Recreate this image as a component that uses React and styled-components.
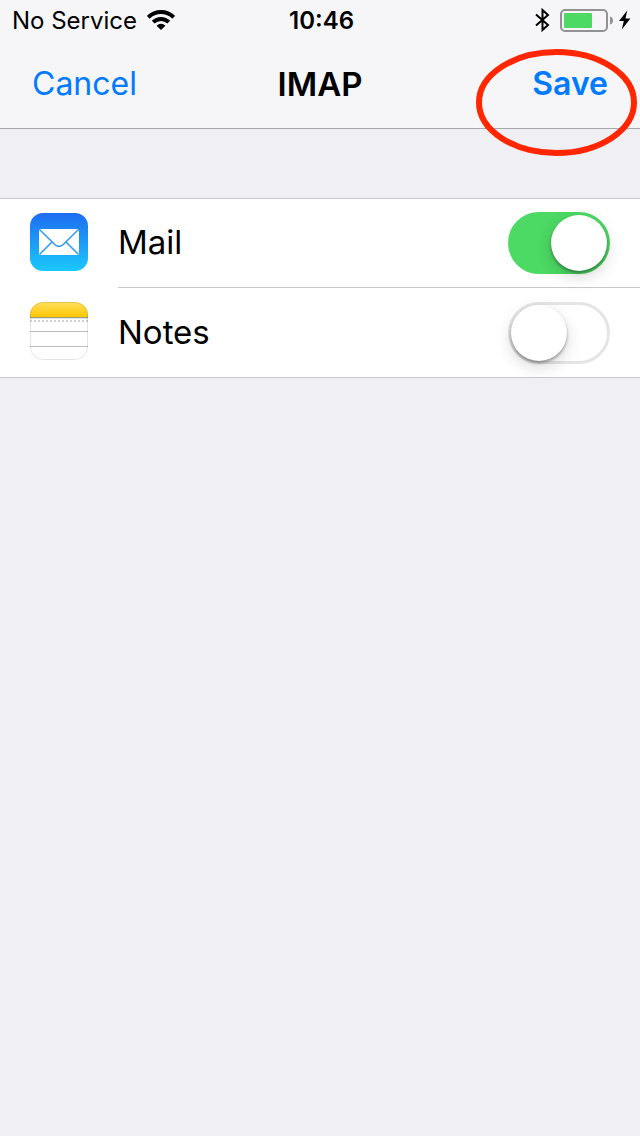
import {useState} from 'react'
import styled, {createGlobalStyle} from 'styled-components'

const GlobalStyle = createGlobalStyle`
  * {
    box-sizing: border-box;
  }
  body {
    margin: 0;
    background-color: #efeff4;
    color: #000000;
    font-family: Inter, 'Liberation Sans', sans-serif;
  }
`

const Header = styled.header`
  position: relative;
  background-color: #f6f6f8;
  border-bottom: 1px solid #a8a8ac;
`

const StatusBar = styled.div`
  display: grid;
  grid-template-columns: 1fr auto 1fr;
  align-items: center;
  height: 40px;
  padding: 0 9px 0 12px;
  font-size: 24px;
  line-height: 28px;
`

const StatusGroup = styled.div`
  display: flex;
  align-items: center;
  justify-content: ${props => (props.$end ? 'flex-end' : 'flex-start')};
  gap: ${props => props.$gap};
`

const Carrier = styled.span`
  padding-top: 2px;
`

const Clock = styled.time`
  padding-top: 2px;
  font-weight: 600;
`

const NavBar = styled.nav`
  display: grid;
  grid-template-columns: 1fr auto 1fr;
  align-items: center;
  height: 88px;
  padding: 0 32px;
`

const Title = styled.h1`
  margin: 0;
  font-size: 33px;
  font-weight: 600;
  line-height: 40px;
`

const NavButton = styled.button`
  justify-self: ${props => (props.$primary ? 'end' : 'start')};
  padding: 0;
  border: none;
  background: none;
  color: #007aff;
  font-family: inherit;
  font-size: 32px;
  font-weight: ${props => (props.$primary ? 600 : 400)};
  line-height: 40px;
  cursor: pointer;
`

const Highlight = styled.svg`
  position: absolute;
  top: 49px;
  right: 3px;
  pointer-events: none;
`

const Content = styled.main`
  padding-top: 69px;
`

const SettingsList = styled.ul`
  margin: 0;
  padding: 0;
  list-style: none;
  background-color: #ffffff;
  border-top: 1px solid #c8c7cc;
  border-bottom: 1px solid #c8c7cc;
`

const Row = styled.li`
  display: flex;
  align-items: center;
  gap: 30px;
  padding-left: 30px;

  > svg {
    flex-shrink: 0;
    margin-bottom: 4px;
  }
`

const RowBody = styled.div`
  display: flex;
  flex: 1;
  align-items: center;
  justify-content: space-between;
  height: 89px;
  padding-right: 30px;
  border-bottom: ${props => (props.$last ? 'none' : '1px solid #c8c7cc')};
`

const RowLabel = styled.label`
  padding-bottom: 2px;
  font-size: 33px;
  line-height: 40px;
`

const Switch = styled.input`
  appearance: none;
  display: flex;
  justify-content: ${props => (props.checked ? 'flex-end' : 'flex-start')};
  width: 102px;
  height: 62px;
  margin: 0;
  border: 3px solid ${props => (props.checked ? '#4cd964' : '#e5e5e5')};
  border-radius: 31px;
  background-color: ${props => (props.checked ? '#4cd964' : '#ffffff')};
  cursor: pointer;

  &::before {
    content: '';
    width: 56px;
    height: 56px;
    border-radius: 50%;
    background-color: #ffffff;
    box-shadow: 0 2px 3px rgba(0, 0, 0, 0.35), 0 6px 16px rgba(0, 0, 0, 0.16);
  }
`

const WifiIcon = () => (
  <svg width="28" height="20" viewBox="0 0 28 20" aria-hidden="true">
    <g fill="none" stroke="#000000" strokeWidth="4">
      <path d="M1.3 7.3A18 18 0 0 1 26.7 7.3" />
      <path d="M6.2 12.2A11 11 0 0 1 21.8 12.2" />
    </g>
    <path d="M14 20L9.6 15.7A6.2 6.2 0 0 1 18.4 15.7Z" />
  </svg>
)

const BluetoothIcon = () => (
  <svg width="15" height="24" viewBox="0 0 15 24" aria-hidden="true">
    <path
      d="M1 6.5L13 17L7.5 22V2L13 7L1 17.5"
      fill="none"
      stroke="#000000"
      strokeWidth="2"
    />
  </svg>
)

const BatteryIcon = () => (
  <svg width="54" height="24" viewBox="0 0 54 24" aria-hidden="true">
    <rect
      x="1"
      y="2"
      width="46"
      height="21"
      rx="4"
      fill="none"
      stroke="#929294"
      strokeWidth="2"
    />
    <rect x="4" y="5" width="28" height="15" rx="1" fill="#4cd964" />
    <path d="M50 8.5C52.2 9 53 10.5 53 12.5S52.2 16 50 16.5Z" fill="#929294" />
  </svg>
)

const BoltIcon = () => (
  <svg width="12" height="20" viewBox="0 0 12 20" aria-hidden="true">
    <path d="M8.2 0.5L0 11H4.8L2.8 19.5L11.4 8.5H6.5Z" />
  </svg>
)

const MailIcon = () => (
  <svg width="58" height="58" viewBox="0 0 58 58" aria-hidden="true">
    <defs>
      <linearGradient id="mailSky" x1="0" y1="0" x2="0" y2="1">
        <stop offset="0" stopColor="#1d6df1" />
        <stop offset="1" stopColor="#1ac8fd" />
      </linearGradient>
    </defs>
    <rect width="58" height="58" rx="13" fill="url(#mailSky)" />
    <rect x="9" y="16" width="40" height="26" fill="#ffffff" />
    <g fill="none" stroke="#2b9bf6" strokeWidth="1.5">
      <path d="M9 16L24.5 31.2Q29 35.6 33.5 31.2L49 16" />
      <path d="M9.5 41.5L22 29M48.5 41.5L36 29" />
    </g>
  </svg>
)

const NotesIcon = () => (
  <svg width="58" height="58" viewBox="0 0 58 58" aria-hidden="true">
    <defs>
      <linearGradient id="notesTop" x1="0" y1="0" x2="0" y2="1">
        <stop offset="0" stopColor="#ffdf60" />
        <stop offset="1" stopColor="#fdc800" />
      </linearGradient>
      <clipPath id="notesShape">
        <rect width="58" height="58" rx="13" />
      </clipPath>
    </defs>
    <g clipPath="url(#notesShape)">
      <rect width="58" height="58" fill="#ffffff" />
      <rect width="58" height="15" fill="url(#notesTop)" />
      <rect y="15" width="58" height="1" fill="#a29a80" />
      <rect y="16" width="58" height="1" fill="#e2e2e2" />
      <path d="M0 19H58" stroke="#d0d0d0" strokeWidth="2" strokeDasharray="2 2" />
      <path d="M0 29.5H58M0 44.5H58" stroke="#bcbcbc" />
    </g>
    <rect
      x="0.5"
      y="0.5"
      width="57"
      height="57"
      rx="12.5"
      fill="none"
      stroke="#000000"
      strokeOpacity="0.1"
    />
  </svg>
)

const services = [
  {id: 'mail', name: 'Mail', Icon: MailIcon},
  {id: 'notes', name: 'Notes', Icon: NotesIcon},
]

const App = () => {
  const [enabled, setEnabled] = useState({mail: true, notes: false})

  const onToggle = id => {
    setEnabled(prev => ({...prev, [id]: !prev[id]}))
  }

  return (
    <>
      <GlobalStyle />
      <Header>
        <StatusBar>
          <StatusGroup $gap="10px">
            <Carrier>No Service</Carrier>
            <WifiIcon />
          </StatusGroup>
          <Clock>10:46</Clock>
          <StatusGroup $end $gap="10px">
            <BluetoothIcon />
            <StatusGroup $gap="5px">
              <BatteryIcon />
              <BoltIcon />
            </StatusGroup>
          </StatusGroup>
        </StatusBar>
        <NavBar>
          <NavButton type="button">Cancel</NavButton>
          <Title>IMAP</Title>
          <NavButton type="button" $primary>
            Save
          </NavButton>
        </NavBar>
        <Highlight width="161" height="107" viewBox="0 0 161 107" aria-hidden="true">
          <ellipse
            cx="80.5"
            cy="53.5"
            rx="77.5"
            ry="50.5"
            fill="none"
            stroke="#ff2600"
            strokeWidth="6"
          />
        </Highlight>
      </Header>
      <Content>
        <SettingsList>
          {services.map(({id, name, Icon}, index) => (
            <Row key={id}>
              <Icon />
              <RowBody $last={index === services.length - 1}>
                <RowLabel htmlFor={id}>{name}</RowLabel>
                <Switch
                  id={id}
                  type="checkbox"
                  role="switch"
                  checked={enabled[id]}
                  onChange={() => onToggle(id)}
                />
              </RowBody>
            </Row>
          ))}
        </SettingsList>
      </Content>
    </>
  )
}

export default App
